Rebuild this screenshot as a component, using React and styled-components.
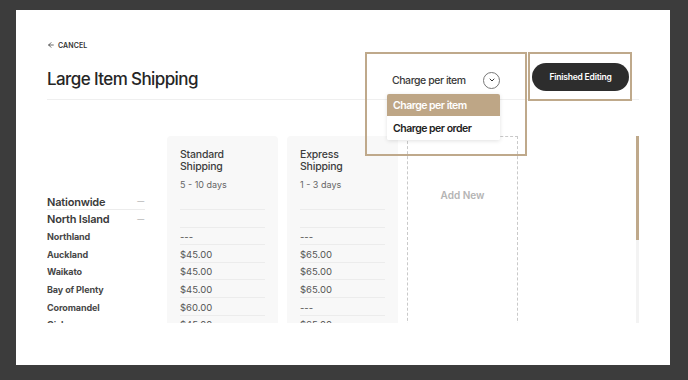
import styled, { createGlobalStyle } from "styled-components";
import { ArrowLeft, ChevronDown } from "lucide-react";

const TAN = "#bfa98b";

const regions = [
  { name: "Nationwide", level: "top", std: "", exp: "" },
  { name: "North Island", level: "island", std: "", exp: "" },
  { name: "Northland", std: "---", exp: "---" },
  { name: "Auckland", std: "$45.00", exp: "$65.00" },
  { name: "Waikato", std: "$45.00", exp: "$65.00" },
  { name: "Bay of Plenty", std: "$45.00", exp: "$65.00" },
  { name: "Coromandel", std: "$60.00", exp: "---" },
  { name: "Gisborne", std: "$45.00", exp: "$65.00" },
];

const methods = [
  { key: "std", title: ["Standard", "Shipping"], days: "5 - 10 days" },
  { key: "exp", title: ["Express", "Shipping"], days: "1 - 3 days" },
];

const App = () => {
  return (
    <>
      <GlobalStyle />
      <Modal>
        <Header>
          <div>
            <Cancel>
              <ArrowLeft size={8} strokeWidth={2.2} />
              CANCEL
            </Cancel>
            <Title>Large Item Shipping</Title>
          </div>
          <Actions>
            <DropdownFrame>
              <Trigger>
                <span>Charge per item</span>
                <IconCircle>
                  <ChevronDown size={8} strokeWidth={3} />
                </IconCircle>
              </Trigger>
              <Menu>
                <MenuItem $active>Charge per item</MenuItem>
                <MenuItem>Charge per order</MenuItem>
              </Menu>
            </DropdownFrame>
            <ButtonFrame>
              <FinishButton>Finished Editing</FinishButton>
            </ButtonFrame>
          </Actions>
        </Header>

        <Body>
          <Labels>
            {regions.map((r) => (
              <LabelRow key={r.name} $level={r.level}>
                <span>{r.name}</span>
                {r.level && <Dash>—</Dash>}
              </LabelRow>
            ))}
          </Labels>

          {methods.map((m) => (
            <Card key={m.key}>
              <CardHead>
                <CardTitle>
                  {m.title[0]}
                  <br />
                  {m.title[1]}
                </CardTitle>
                <Days>{m.days}</Days>
              </CardHead>
              {regions.map((r) => (
                <ValueRow key={r.name}>{r[m.key]}</ValueRow>
              ))}
            </Card>
          ))}

          <AddNew>Add New</AddNew>

          <ScrollTrack>
            <ScrollThumb />
          </ScrollTrack>
        </Body>
      </Modal>
    </>
  );
};

const GlobalStyle = createGlobalStyle`
  html, body {
    margin: 0;
    background: #3c3c3c;
    font-family: Inter, "Noto Sans", sans-serif;
    color: #2f2f2f;
  }
  * {
    box-sizing: border-box;
  }
`;

const Modal = styled.div`
  margin: 10px 0 0 16px;
  width: 654px;
  height: 355px;
  background: #fff;
  padding: 0 31px;
  display: flex;
  flex-direction: column;
`;

const Header = styled.header`
  height: 90px;
  padding-top: 30px;
  border-bottom: 1px solid #efefef;
  display: flex;
  justify-content: space-between;
  align-items: flex-start;
  flex-shrink: 0;
`;

const Cancel = styled.div`
  display: flex;
  align-items: center;
  gap: 3px;
  height: 10px;
  font-size: 7px;
  font-weight: 600;
  letter-spacing: 0.1px;
  color: #333;
`;

const Title = styled.h1`
  margin: 18px 0 0;
  font-size: 17px;
  line-height: 22px;
  font-weight: 500;
  letter-spacing: -0.6px;
  color: #262626;
`;

const Actions = styled.div`
  display: flex;
  gap: 1px;
  margin-top: 12px;
  margin-right: 7px;
  position: relative;
  z-index: 2;
`;

const DropdownFrame = styled.div`
  width: 162px;
  height: 104px;
  border: 2px solid ${TAN};
  padding: 16px 25px 0 20px;
`;

const Trigger = styled.div`
  height: 20px;
  padding-left: 5px;
  display: flex;
  align-items: center;
  justify-content: space-between;
  font-size: 10.5px;
  font-weight: 500;
  letter-spacing: -0.45px;
  color: #3a3a3a;
`;

const IconCircle = styled.span`
  width: 17px;
  height: 17px;
  border: 1px solid #777;
  border-radius: 50%;
  display: flex;
  align-items: center;
  justify-content: center;
  color: #333;
`;

const Menu = styled.div`
  margin-top: 4px;
  background: #fff;
  box-shadow: 0 1px 4px rgba(0, 0, 0, 0.12);
  border-radius: 2px;
  overflow: hidden;
`;

const MenuItem = styled.div`
  height: ${(p) => (p.$active ? "22px" : "24px")};
  padding-left: 6px;
  display: flex;
  align-items: center;
  font-size: 10.5px;
  font-weight: 600;
  letter-spacing: -0.5px;
  background: ${(p) => (p.$active ? "#bea686" : "#fff")};
  color: ${(p) => (p.$active ? "#fff" : "#222")};
`;

const ButtonFrame = styled.div`
  width: 104px;
  height: 49px;
  border: 2px solid ${TAN};
  padding: 9px 0 0 2px;
`;

const FinishButton = styled.button`
  width: 97px;
  height: 28px;
  border: 0;
  border-radius: 14px;
  background: #2d2d2d;
  color: #fff;
  font-family: inherit;
  font-size: 8.5px;
  font-weight: 600;
  letter-spacing: -0.2px;
  padding: 0;
`;

const Body = styled.div`
  margin-top: 36px;
  height: 187px;
  display: flex;
  align-items: flex-start;
  overflow: hidden;
`;

const Labels = styled.div`
  width: 98px;
  margin-right: 22px;
  padding-top: 56.5px;
  flex-shrink: 0;
`;

const LabelRow = styled.div`
  height: 17.6px;
  padding-top: 1.5px;
  display: flex;
  align-items: center;
  justify-content: space-between;
  font-size: ${(p) => (p.$level ? "11px" : "9px")};
  font-weight: ${(p) => (p.$level ? 600 : 700)};
  letter-spacing: ${(p) => (p.$level ? "-0.2px" : "-0.1px")};
  color: ${(p) => (p.$level ? "#3a3a3a" : "#474747")};
  border-bottom: 1px solid
    ${(p) => (p.$level === "top" ? "#ececec" : "transparent")};
`;

const Dash = styled.span`
  font-size: 7px;
  color: #b8b8b8;
  margin-right: 1px;
`;

const Card = styled.div`
  width: 111px;
  height: 200px;
  margin-right: 9px;
  flex-shrink: 0;
  background: #f8f8f8;
  border-radius: 4px;
  padding: 13px 13px 0;
`;

const CardHead = styled.div`
  height: 43.5px;
`;

const CardTitle = styled.div`
  font-size: 10.5px;
  line-height: 12px;
  font-weight: 500;
  letter-spacing: -0.2px;
  color: #3d3d3d;
`;

const Days = styled.div`
  margin-top: 6px;
  font-size: 9px;
  line-height: 11px;
  color: #666;
`;

const ValueRow = styled.div`
  height: 17.6px;
  padding-top: 1.5px;
  display: flex;
  align-items: center;
  font-size: 9.5px;
  color: #555;
  border-bottom: 1px solid #ececec;
`;

const AddNew = styled.div`
  width: 111px;
  height: 200px;
  flex-shrink: 0;
  border: 1px dashed #c9c9c9;
  padding-top: 52px;
  text-align: center;
  font-size: 10px;
  line-height: 12px;
  font-weight: 600;
  color: #b4b4b4;
`;

const ScrollTrack = styled.div`
  margin-left: auto;
  width: 3px;
  height: 187px;
  background: #f3f3f3;
`;

const ScrollThumb = styled.div`
  height: 104px;
  background: ${TAN};
`;

export default App;
